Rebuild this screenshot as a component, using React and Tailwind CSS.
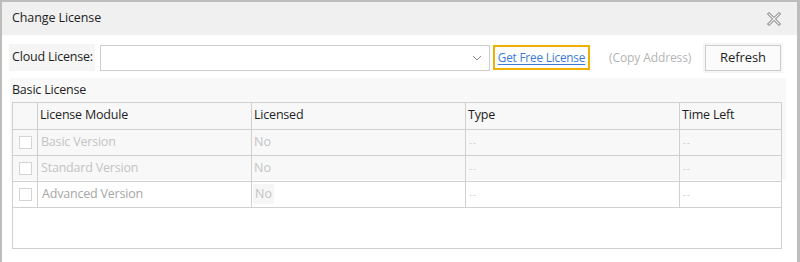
import React from 'react';

const rows = [
  { name: 'Basic Version', muted: true },
  { name: 'Standard Version', muted: true },
  { name: 'Advanced Version', muted: false },
];

const CloseIcon = () => (
  <svg width="16" height="16" viewBox="0 0 16 16" className="block">
    <path
      d="M1.5 3 L3 1.5 L8 6.5 L13 1.5 L14.5 3 L9.5 8 L14.5 13 L13 14.5 L8 9.5 L3 14.5 L1.5 13 L6.5 8 Z"
      fill="none"
      stroke="#707070"
      strokeWidth="1"
      strokeLinejoin="round"
    />
  </svg>
);

const Chevron = () => (
  <svg width="10" height="6" viewBox="0 0 10 6" className="block">
    <path d="M1 1 L5 5 L9 1" fill="none" stroke="#8a8a8a" strokeWidth="1" />
  </svg>
);

const Checkbox = () => (
  <div className="w-[13px] h-[13px] border border-[#d4d4d4] bg-white" />
);

export default function App() {
  return (
    <div className="w-[800px] h-[262px] bg-white border-l-2 border-t-2 border-r-[3px] border-[#bdbdbd] flex flex-col overflow-hidden font-['Open_Sans',sans-serif] text-[12.5px] text-[#1e1e1e]">
      {/* Title bar */}
      <div className="h-[33px] shrink-0 bg-[#f0f0f0] flex items-center justify-between pl-[10px] pr-[15px]">
        <span className="tracking-[-0.1px]">Change License</span>
        <CloseIcon />
      </div>

      {/* Cloud license row */}
      <div className="flex items-center mt-[9px] pl-[7px] h-[27px]">
        <div className="h-[27px] w-[86px] bg-[#f5f5f5] flex items-center pl-[3px] tracking-[-0.2px]">
          Cloud License:
        </div>
        <div className="ml-[5px] w-[390px] h-[26px] border border-[#cdcdcd] bg-white flex items-center justify-end pr-[7px]">
          <Chevron />
        </div>
        <div className="ml-[3px] w-[97px] h-[25px] border-2 border-[#f0b000] flex items-center justify-center">
          <span className="text-[#3a7bd5] underline underline-offset-2 text-[11.8px] tracking-[-0.2px]">Get Free License</span>
        </div>
        <span className="ml-[19px] text-[#b4b4b4] text-[12px] tracking-[-0.1px]">(Copy Address)</span>
        <div className="ml-auto mr-[14px] p-[2px] bg-[#f6f6f6]">
          <div className="w-[76px] h-[26px] border border-[#cccccc] bg-[#fbfbfb] flex items-center justify-center text-[13px] tracking-[-0.1px]">
            Refresh
          </div>
        </div>
      </div>

      {/* Basic license panel */}
      <div className="mt-[7px] ml-[8px] w-[776px] h-[171px] bg-[linear-gradient(#f8f8f8_102px,#ffffff_102px)] flex flex-col">
        <div className="h-[24px] flex items-center pl-[2px] tracking-[-0.2px]">Basic License</div>
        <div className="ml-[2px] w-[770px] h-[148px] border border-[#d0d0d0] flex flex-col">
          {/* header */}
          <div className="grid grid-cols-[25px_214px_214px_214px_1fr] h-[27px] border-b border-[#d0d0d0]">
            <div className="border-r border-[#d0d0d0]" />
            <div className="border-r border-[#d0d0d0] flex items-center pl-[2px] tracking-[-0.2px]">License Module</div>
            <div className="border-r border-[#d0d0d0] flex items-center pl-[2px] tracking-[-0.2px]">Licensed</div>
            <div className="border-r border-[#d0d0d0] flex items-center pl-[2px] tracking-[-0.2px]">Type</div>
            <div className="flex items-center pl-[2px] tracking-[-0.2px]">Time Left</div>
          </div>
          {rows.map((r) => (
            <div
              key={r.name}
              className="grid grid-cols-[25px_214px_214px_214px_1fr] h-[26px] border-b border-[#d0d0d0]"
            >
              <div className="border-r border-[#d0d0d0] flex items-center justify-center">
                <Checkbox />
              </div>
              <div
                className={`border-r border-[#d0d0d0] flex items-center tracking-[-0.2px] ${
                  r.muted ? 'text-[#c4c4c4] pl-[3px]' : 'text-[#a6a6a6] pl-[4px]'
                }`}
              >
                {r.name}
              </div>
              <div className="border-r border-[#d0d0d0] flex items-center pl-[1px] text-[#c4c4c4]">
                <span className={r.muted ? 'px-[1px]' : 'px-[2px] bg-[#f6f6f6] leading-[20px]'}>No</span>
              </div>
              <div className="border-r border-[#d0d0d0] flex items-center pl-[3px] text-[#c8c8c8] text-[9px] tracking-[1px]">
                --
              </div>
              <div className="flex items-center pl-[3px] text-[#c8c8c8] text-[9px] tracking-[1px]">--</div>
            </div>
          ))}
        </div>
      </div>
    </div>
  );
}
